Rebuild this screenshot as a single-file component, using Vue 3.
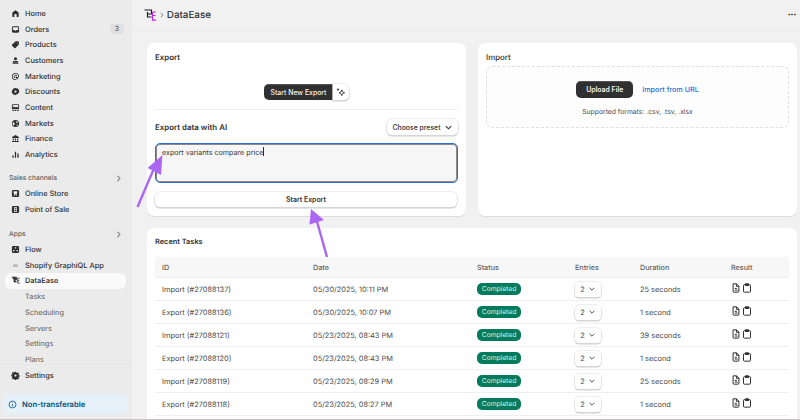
<template>
  <div class="app">
    <aside class="sidebar">
      <nav class="nav">
        <a v-for="item in mainNav" :key="item.label" class="nav-row">
          <svg class="nav-icon" viewBox="0 0 20 20"><path :d="icons[item.icon]" fill-rule="evenodd" /></svg>
          <span>{{ item.label }}</span>
          <em v-if="item.badge" class="badge">{{ item.badge }}</em>
        </a>

        <div class="nav-heading first">Sales channels <span class="caret">›</span></div>
        <a v-for="item in channels" :key="item.label" class="nav-row">
          <svg class="nav-icon" viewBox="0 0 20 20"><path :d="icons[item.icon]" fill-rule="evenodd" /></svg>
          <span>{{ item.label }}</span>
        </a>

        <div class="nav-heading">Apps <span class="caret">›</span></div>
        <a class="nav-row">
          <svg class="nav-icon" viewBox="0 0 20 20"><path :d="icons.flow" fill-rule="evenodd" /></svg>
          <span>Flow</span>
        </a>
        <a class="nav-row">
          <svg class="nav-icon faint" viewBox="0 0 20 20"><path :d="icons.folder" /></svg>
          <span>Shopify GraphiQL App</span>
        </a>
        <a class="nav-row selected">
          <svg class="nav-icon" viewBox="0 0 12 12" fill="none" stroke="#303030" stroke-width="1.1">
            <path d="M1 1.5h6.5v3.5H4M4 3.5V8h3.5M9 3h2.5M9 6h2M9 9.5h2.5M9 3v6.5" />
          </svg>
          <span>DataEase</span>
        </a>
        <a v-for="sub in subNav" :key="sub" class="nav-row sub"><span>{{ sub }}</span></a>
      </nav>

      <div class="side-foot">
        <a class="nav-row">
          <svg class="nav-icon" viewBox="0 0 20 20"><path :d="icons.gear" fill-rule="evenodd" /></svg>
          <span>Settings</span>
        </a>
        <div class="plan">
          <svg viewBox="0 0 20 20" fill="none" stroke="currentColor" stroke-width="1.7">
            <circle cx="10" cy="10" r="7.6" />
            <path d="M10 9v5M10 5.6v1.4" />
          </svg>
          Non-transferable
        </div>
      </div>
    </aside>

    <div class="main">
      <header class="topbar">
        <svg class="logo" viewBox="0 0 12 12" fill="none" stroke-width="1.2">
          <path d="M.5 1h7v4H3.5M3.5 3v5h4" stroke="#1a1a1a" />
          <path d="M8.5 3H12M8.5 3v8.2H12M8.5 6.5h3" stroke="#c026e8" />
        </svg>
        <span class="crumb">›</span>
        <h1>DataEase</h1>
        <span class="more">···</span>
      </header>

      <div class="content">
        <section class="card export">
          <h2>Export</h2>
          <div class="start-row">
            <button class="btn dark joined">Start New Export</button>
            <button class="btn spark" aria-label="Sparkle">
              <svg viewBox="0 0 12 12" fill="#303030">
                <path d="M7 3.4 8 6l2.4 1-2.4 1-1 2.4L6 8 3.6 7 6 6z" fill="none" stroke="#303030" stroke-width="1" />
                <path d="M2.4 1 3 2.4l1.3.6L3 3.6 2.4 5l-.6-1.4L.5 3l1.3-.6z" />
              </svg>
            </button>
          </div>
          <hr />
          <div class="ai-row">
            <h2>Export data with AI</h2>
            <button class="btn preset">
              Choose preset
              <svg viewBox="0 0 10 10" fill="none" stroke="#303030" stroke-width="1.2"><path d="M2 3.5 5 6.5 8 3.5" /></svg>
            </button>
          </div>
          <div class="prompt">export variants compare price<i class="cursor"></i></div>
          <button class="btn wide">Start Export</button>
        </section>

        <section class="card import">
          <h2 class="light">Import</h2>
          <div class="dropzone">
            <div class="drop-actions">
              <button class="btn dark upload">Upload File</button>
              <a class="link">Import from URL</a>
            </div>
            <p>Supported formats: .csv, .tsv, .xlsx</p>
          </div>
        </section>

        <section class="card tasks">
          <h2 class="recent">Recent Tasks</h2>
          <table>
            <colgroup>
              <col class="c-id" /><col class="c-date" /><col class="c-status" />
              <col class="c-entries" /><col class="c-duration" /><col class="c-result" />
            </colgroup>
            <thead>
              <tr><th>ID</th><th>Date</th><th>Status</th><th>Entries</th><th>Duration</th><th>Result</th></tr>
            </thead>
            <tbody>
              <tr v-for="task in tasks" :key="task.id">
                <td>{{ task.id }}</td>
                <td>{{ task.date }}</td>
                <td><span class="status">Completed</span></td>
                <td>
                  <span class="entries">2
                    <svg viewBox="0 0 10 10" fill="none" stroke="#4a4a4a" stroke-width="1.2"><path d="M2 3.5 5 6.5 8 3.5" /></svg>
                  </span>
                </td>
                <td>{{ task.duration }}</td>
                <td class="result">
                  <svg viewBox="0 0 12 12" fill="none" stroke="#303030" stroke-width="1.2">
                    <path d="M2.5 1h4.2l2.8 2.8V10a1 1 0 0 1-1 1H3.500a1 1 0 0 1-1-1z" />
                    <path d="M4.500 6.500h2.500M4.500 8.500h3.500M6.500 1v3h3" />
                  </svg>
                  <svg viewBox="0 0 12 12" fill="none" stroke="#303030" stroke-width="1.2">
                    <path d="M4 2H2.800a1 1 0 0 0-1 1v7a1 1 0 0 0 1 1h6.400a1 1 0 0 0 1-1V3a1 1 0 0 0-1-1H8" />
                    <path d="M4 1h4v2H4z" fill="#303030" />
                  </svg>
                </td>
              </tr>
            </tbody>
          </table>
        </section>
      </div>
    </div>

    <svg class="arrows" viewBox="0 0 800 420" fill="#ab66f2" stroke="#ab66f2">
      <path d="M137.500 207 155 166" stroke-width="2.400" fill="none" />
      <path d="M162.500 155 147.500 168 161 175z" stroke="none" />
      <path d="M327 257 316 218" stroke-width="2.400" fill="none" />
      <path d="M311 209 309.500 224.500 324 220z" stroke="none" />
    </svg>
    <div class="edge"></div>
  </div>
</template>

<script setup>
const icons = {
  home: 'M10 2.500 3 8v8.500a1 1 0 0 0 1 1h3.500V12a1 1 0 0 1 1-1h3a1 1 0 0 1 1 1v5.500H16a1 1 0 0 0 1-1V8z',
  orders: 'M5 3h10a3 3 0 0 1 3 3v8a3 3 0 0 1-3 3H5a3 3 0 0 1-3-3V6a3 3 0 0 1 3-3zm-1 8h4l1 1.500h2l1-1.500h4V6a1 1 0 0 0-1-1H5a1 1 0 0 0-1 1z',
  products: 'M10.500 3H16a1.500 1.500 0 0 1 1.500 1.500V10L10 17.500a2 2 0 0 1-2.800 0l-4.700-4.700a2 2 0 0 1 0-2.800zM14 5.500a1 1 0 1 0 0 2 1 1 0 0 0 0-2z',
  customers: 'M10 2.500a3.500 3.500 0 1 1 0 7 3.500 3.500 0 0 1 0-7zM6 11h8a2 2 0 0 1 2 2v2H4v-2a2 2 0 0 1 2-2zM3.500 16h13v1.500h-13z',
  marketing: 'M10 2a8 8 0 1 0 0 16h1v-1.800h-1a6.200 6.200 0 1 1 6.200-6.200v1H18v-1a8 8 0 0 0-8-8zM10 6a4 4 0 1 0 0 8v-1.700a2.300 2.300 0 1 1 2.300-2.300H14a4 4 0 0 0-4-4zM10 10l8 2.800-3.300 1.400-1.400 3.300z',
  discounts: 'M10 1.500l2.300 1.600 2.700-.2 1.100 2.500 2.400 1.400-.7 2.700.7 2.700-2.400 1.400-1.100 2.500-2.700-.2L10 18.500l-2.300-1.600-2.700.2-1.100-2.500-2.400-1.400.7-2.700-.7-2.700 2.400-1.400L5 2.900l2.700.2zM10 7.500a2.500 2.500 0 1 0 0 5 2.500 2.500 0 0 0 0-5z',
  content: 'M4 2.500h12a2 2 0 0 1 2 2V12a2 2 0 0 1-2 2H4a2 2 0 0 1-2-2V4.500a2 2 0 0 1 2-2zm0 2V10l3-2.500 3 2.500 2-1.500 4 2V4.500zM3 15.500h3.500V17.500H3zM8.300 15.500h3.400v2H8.300zM13.500 15.500H17v2h-3.500z',
  markets: 'M10 2a8 8 0 1 1 0 16 8 8 0 0 1 0-16zM4.500 6.500 8 9l-.5 5-2 .5A6 6 0 0 1 4.500 6.500zM12 4.500 11 7l2.500 2 2.300-.5A6 6 0 0 0 12 4.500zM13 12l-1 3.500 2.500-1 1-2.500z',
  finance: 'M10 2 2.500 6.500V9h15V6.500zM4 10h2.500v4.500H4zM8.750 10h2.500v4.500h-2.500zM13.500 10H16v4.500h-2.500zM2.500 15.500h15V18h-15z',
  analytics: 'M3 11.500h2.800V17H3zM8.600 4h2.800v13H8.600zM14.200 8h2.800v9h-2.800z',
  store: 'M5 2h10a3 3 0 0 1 3 3v10a3 3 0 0 1-3 3H5a3 3 0 0 1-3-3V5a3 3 0 0 1 3-3zm.500 3v2.500a1.500 1.500 0 0 0 1 1.400V15h2v-3h3v3h1.500V8.900a1.500 1.500 0 0 0 1-1.400V5z',
  pos: 'M5 2h10a3 3 0 0 1 3 3v10a3 3 0 0 1-3 3H5a3 3 0 0 1-3-3V5a3 3 0 0 1 3-3zm2 2.500v11h6v-11zM8.500 6h3v2.500h-3zM8.500 10.500h3V14h-3z',
  flow: 'M5 2h10a3 3 0 0 1 3 3v10a3 3 0 0 1-3 3H5a3 3 0 0 1-3-3V5a3 3 0 0 1 3-3zm3.500 3v3h3V5zM4.500 11v3h3v-3zM12.500 11v3h3v-3z',
  folder: 'M5 7h4l1 1h5v5.500H5z',
  gear: 'M8.500 1.500h3l.5 2.300 1.800.8 2-1.300 2.100 2.100-1.300 2 .8 1.800 2.100.300v3l-2.100.5-.8 1.800 1.300 2-2.100 2.100-2-1.300-1.800.8-.5 2.100h-3l-.5-2.100-1.800-.8-2 1.300L2 15.800l1.300-2-.8-1.800-2-.5v-3l2-.3.800-1.800-1.300-2L4.100 2.300l2 1.300 1.800-.8zM10 7.500a2.500 2.500 0 1 0 0 5 2.500 2.500 0 0 0 0-5z',
}

const mainNav = [
  { label: 'Home', icon: 'home' },
  { label: 'Orders', icon: 'orders', badge: 3 },
  { label: 'Products', icon: 'products' },
  { label: 'Customers', icon: 'customers' },
  { label: 'Marketing', icon: 'marketing' },
  { label: 'Discounts', icon: 'discounts' },
  { label: 'Content', icon: 'content' },
  { label: 'Markets', icon: 'markets' },
  { label: 'Finance', icon: 'finance' },
  { label: 'Analytics', icon: 'analytics' },
]

const channels = [
  { label: 'Online Store', icon: 'store' },
  { label: 'Point of Sale', icon: 'pos' },
]

const subNav = ['Tasks', 'Scheduling', 'Servers', 'Settings', 'Plans']

const tasks = [
  { id: 'Import (#27088137)', date: '05/30/2025, 10:11 PM', duration: '25 seconds' },
  { id: 'Export (#27088136)', date: '05/30/2025, 10:07 PM', duration: '1 second' },
  { id: 'Import (#27088121)', date: '05/23/2025, 08:43 PM', duration: '39 seconds' },
  { id: 'Export (#27088120)', date: '05/23/2025, 08:43 PM', duration: '1 second' },
  { id: 'Import (#27088119)', date: '05/23/2025, 08:29 PM', duration: '25 seconds' },
  { id: 'Export (#27088118)', date: '05/23/2025, 08:27 PM', duration: '1 second' },
]
</script>

<style>
html, body { margin: 0; background: #f1f1f1; }
</style>

<style scoped>
.app {
  position: relative;
  display: flex;
  width: 800px;
  height: 420px;
  overflow: hidden;
  font-family: Inter, "Liberation Sans", sans-serif;
  font-size: 7.4px;
  text-rendering: geometricPrecision;
  color: #4a4a4a;
  background: #f1f1f1;
}

/* sidebar */
.sidebar {
  flex: 0 0 132px;
  display: flex;
  flex-direction: column;
  height: 100%;
  background: #ebebeb;
}
.nav {
  flex: 1;
  min-height: 0;
  overflow: hidden;
  padding: 5.500px 6px 0 5px;
}
.nav-row {
  display: flex;
  align-items: center;
  height: 15.700px;
  padding-left: 6px;
  color: #303030;
  font-weight: 500;
  border-radius: 6px;
}
.nav-icon {
  width: 9px;
  height: 9px;
  margin-right: 5px;
  fill: #303030;
  flex-shrink: 0;
}
.nav-icon.faint { fill: #b5b5b5; }
.badge {
  margin-left: auto;
  margin-right: 2px;
  width: 14px;
  height: 10px;
  line-height: 10px;
  text-align: center;
  font-style: normal;
  font-size: 7px;
  color: #616161;
  background: #e0e0e0;
  border-radius: 4px;
}
.selected { background: #fafafa; color: #1a1a1a; }
.sub { padding-left: 20px; color: #616161; font-weight: 400; }
.nav-heading {
  display: flex;
  justify-content: space-between;
  align-items: center;
  height: 16.500px;
  margin-top: 8px;
  padding: 0 5px 0 4px;
  color: #616161;
  font-size: 6.700px;
  font-weight: 500;
}
.nav-heading.first { margin-top: 7px; }
.caret { font-size: 12px; color: #8a8a8a; }
.side-foot {
  background: #ebebeb;
  padding: 2px 4px 6px 3px;
  border-top: 1px solid #e6e6e6;
}
.side-foot .nav-row { margin: 0 2px 11px; }
.plan {
  display: flex;
  align-items: center;
  gap: 5px;
  height: 20px;
  padding-left: 5px;
  font-size: 7.600px;
  color: #00527c;
  font-weight: 600;
  background: #e5f0f9;
  border-radius: 5px;
}
.plan svg { width: 9px; height: 9px; }

/* main */
.main { flex: 1; min-width: 0; }
.topbar {
  display: flex;
  align-items: center;
  height: 30px;
  padding: 0 4px 0 12px;
  border-bottom: 1px solid #ebebeb;
}
.logo { width: 12px; height: 12px; }
.crumb { margin: 0 3px 0 4px; color: #8a8a8a; font-size: 10px; }
h1 {
  margin: 0;
  font-size: 9.800px;
  font-weight: 500;
  color: #303030;
}
.more { margin-left: auto; font-weight: 700; color: #303030; font-size: 10px; letter-spacing: -.5px; }
.content {
  display: grid;
  grid-template-columns: 319px 319px;
  column-gap: 12px;
  row-gap: 12px;
  padding: 12px 0 0 15px;
}
.card {
  background: #fff;
  border-radius: 7px;
  box-shadow: 0 1px 0 #dcdcdc;
  padding: 8px;
}
h2 {
  margin: 0;
  font-size: 7.900px;
  line-height: 12px;
  font-weight: 600;
  color: #303030;
}
h2.light { font-weight: 500; }
h2.recent { font-size: 7.400px; }
.export, .import { height: 173px; box-sizing: border-box; }
.tasks { grid-column: 1 / 3; padding-top: 8px; height: 230px; box-sizing: border-box; }

.btn {
  font: inherit;
  font-size: 6.900px;
  font-weight: 600;
  color: #303030;
  background: #fff;
  border: 0;
  border-radius: 5px;
  box-shadow: 0 0 0 .5px #dedede, 0 1px 0 .5px #cfcfcf;
  cursor: pointer;
  padding: 0;
}
.btn.dark {
  color: #f5f5f5;
  background: #303030;
  box-shadow: inset 0 1px 0 #555;
}
.start-row {
  display: flex;
  justify-content: center;
  margin-top: 21px;
}
.joined { width: 69px; height: 16px; border-radius: 5px 0 0 5px; font-weight: 500; }
.spark { width: 16px; height: 16px; border-radius: 0 5px 5px 0; display: flex; align-items: center; justify-content: center; }
.spark svg { width: 10px; height: 10px; }
hr {
  margin: 9px 0 0;
  border: 0;
  border-top: 1px solid #ededed;
}
.ai-row {
  display: flex;
  align-items: center;
  justify-content: space-between;
  height: 16px;
  margin-top: 9px;
}
.preset {
  display: flex;
  align-items: center;
  justify-content: center;
  gap: 3px;
  width: 71px;
  height: 16px;
  font-weight: 500;
}
.preset svg { width: 9px; height: 9px; }
.prompt {
  box-sizing: border-box;
  width: 303px;
  height: 40px;
  margin-top: 8px;
  padding: 3px 6px;
  font-size: 7.150px;
  line-height: 12px;
  color: #3d3d3d;
  background: #f6f6f6;
  border: 1.500px solid #2a6fd6;
  border-radius: 5px;
  box-shadow: inset 0 0 0 1px #8a8a8a;
}
.cursor { display: inline-block; width: 1px; height: 9px; background: #303030; vertical-align: -1px; }
.wide { display: block; width: 302px; height: 15px; margin-top: 9px; }

.dropzone {
  box-sizing: border-box;
  height: 62px;
  margin-top: 3px;
  padding-top: 14px;
  background: #fdfdfd;
  border: 1px dashed #e0e0e0;
  border-radius: 6px;
  text-align: center;
}
.drop-actions { display: flex; justify-content: center; align-items: center; gap: 9px; }
.upload { width: 57px; height: 17px; border-radius: 5px; }
.link { color: #2b6fd6; font-size: 7.200px; font-weight: 500; }
.dropzone p { margin: 8px 0 0; font-size: 6.800px; line-height: 11px; color: #4a4a4a; }

table {
  width: 634px;
  margin-top: 9px;
  border-collapse: collapse;
  table-layout: fixed;
}
.c-id { width: 151px; }
.c-date { width: 164px; }
.c-status { width: 98px; }
.c-entries { width: 65px; }
.c-duration { width: 91px; }
.c-result { width: 65px; }
th {
  height: 20px;
  padding: 0 7px;
  text-align: left;
  font-size: 7.200px;
  font-weight: 500;
  color: #616161;
  background: #f7f7f7;
  border-bottom: 1px solid #ebebeb;
}
td {
  height: 22px;
  padding: 0 7px;
  color: #4a4a4a;
  border-bottom: 1px solid #efefef;
}
.status {
  display: inline-block;
  width: 44px;
  height: 12px;
  line-height: 12px;
  text-align: center;
  font-size: 6.700px;
  color: #d9f5e6;
  background: #047b5d;
  border-radius: 5px;
}
.entries {
  display: flex;
  align-items: center;
  justify-content: center;
  gap: 3px;
  width: 26px;
  height: 15px;
  background: #fff;
  border-radius: 4px;
  box-shadow: 0 0 0 .5px #dedede, 0 1px 0 .5px #cfcfcf;
}
.entries svg { width: 8px; height: 8px; }
.result svg { width: 10px; height: 10px; margin-right: 1px; }

/* annotation arrows on top of the screenshot */
.arrows {
  position: absolute;
  inset: 0;
  width: 800px;
  height: 420px;
  pointer-events: none;
}
.edge {
  position: absolute;
  left: 0;
  right: 0;
  bottom: 0;
  height: 1.500px;
  background: #c9c2c4;
}
</style>
